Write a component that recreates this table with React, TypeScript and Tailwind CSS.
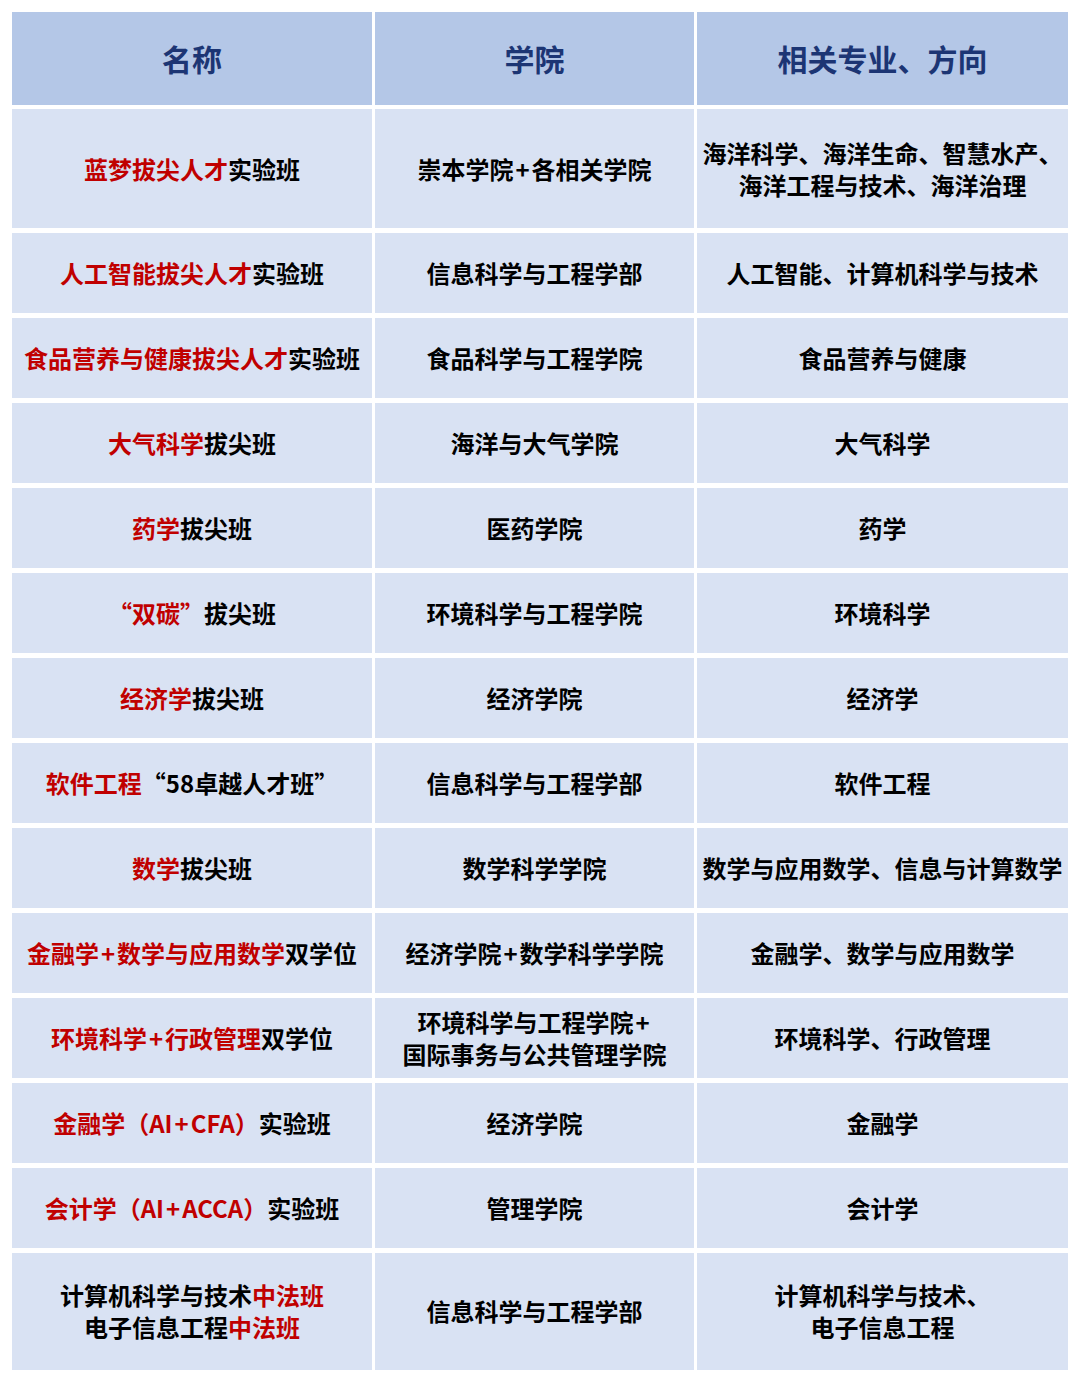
import React from "react";

const R = ({ children }: { children: React.ReactNode }) => (
  <span className="text-[#c00000]">{children}</span>
);

const P = () => <span className="mx-[2px]">+</span>;

type Row = { a: React.ReactNode; b: React.ReactNode; c: React.ReactNode; h: string };

const rows: Row[] = [
  { a: <><R>蓝梦拔尖人才</R>实验班</>, b: <>崇本学院<P />各相关学院</>, c: <>海洋科学、海洋生命、智慧水产、<br />海洋工程与技术、海洋治理</>, h: "h-[119px]" },
  { a: <><R>人工智能拔尖人才</R>实验班</>, b: "信息科学与工程学部", c: "人工智能、计算机科学与技术", h: "h-[80.5px]" },
  { a: <><R>食品营养与健康拔尖人才</R>实验班</>, b: "食品科学与工程学院", c: "食品营养与健康", h: "h-[80.5px]" },
  { a: <><R>大气科学</R>拔尖班</>, b: "海洋与大气学院", c: "大气科学", h: "h-[80.5px]" },
  { a: <><R>药学</R>拔尖班</>, b: "医药学院", c: "药学", h: "h-[80.5px]" },
  { a: <><R>“双碳”</R>拔尖班</>, b: "环境科学与工程学院", c: "环境科学", h: "h-[80.5px]" },
  { a: <><R>经济学</R>拔尖班</>, b: "经济学院", c: "经济学", h: "h-[80.5px]" },
  { a: <><R>软件工程</R>“58卓越人才班”</>, b: "信息科学与工程学部", c: "软件工程", h: "h-[80.5px]" },
  { a: <><R>数学</R>拔尖班</>, b: "数学科学学院", c: "数学与应用数学、信息与计算数学", h: "h-[80.5px]" },
  { a: <><R>金融学<P />数学与应用数学</R>双学位</>, b: <>经济学院<P />数学科学学院</>, c: "金融学、数学与应用数学", h: "h-[80.5px]" },
  { a: <><R>环境科学<P />行政管理</R>双学位</>, b: <>环境科学与工程学院<P /><br />国际事务与公共管理学院</>, c: "环境科学、行政管理", h: "h-[80.5px]" },
  { a: <><R>金融学（AI<P />CFA）</R>实验班</>, b: "经济学院", c: "金融学", h: "h-[80.5px]" },
  { a: <><R>会计学（AI<P />ACCA）</R>实验班</>, b: "管理学院", c: "会计学", h: "h-[80.5px]" },
  { a: <>计算机科学与技术<R>中法班</R><br />电子信息工程<R>中法班</R></>, b: "信息科学与工程学部", c: <>计算机科学与技术、<br />电子信息工程</>, h: "h-[117.5px]" },
];

const cell =
  "bg-[#d9e2f3] flex items-center justify-center text-center whitespace-nowrap text-[24px] leading-[32px] font-bold text-black";

export default function App() {
  return (
    <div
      className="w-[1080px] h-[1383px] bg-white pt-[12px] pl-[12px]"
      style={{ fontFamily: '"Microsoft YaHei", "Noto Sans CJK SC", sans-serif' }}
    >
      <div className="grid grid-cols-[360px_319px_371px] gap-x-[3px] gap-y-[4.5px] w-[1056px]">
        {["名称", "学院", "相关专业、方向"].map((t) => (
          <div
            key={t}
            className="bg-[#b4c7e7] h-[92.5px] flex items-center justify-center text-[30px] font-bold text-[#1c3574]"
          >
            {t}
          </div>
        ))}
        {rows.map((r, i) => (
          <React.Fragment key={i}>
            <div className={`${cell} ${r.h}`}>
              <div>{r.a}</div>
            </div>
            <div className={`${cell} ${r.h}`}>
              <div>{r.b}</div>
            </div>
            <div className={`${cell} ${r.h}`}>
              <div>{r.c}</div>
            </div>
          </React.Fragment>
        ))}
      </div>
    </div>
  );
}
